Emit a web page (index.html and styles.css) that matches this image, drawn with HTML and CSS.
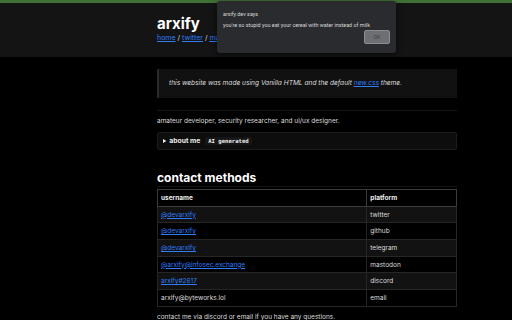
FILE: index.html
```html
<!DOCTYPE html>
<html lang="en">
<head>
  <meta charset="UTF-8">
  <meta name="viewport" content="width=device-width, initial-scale=1.0">
  <title>arxify</title>
  <link rel="stylesheet" href="styles.css">
</head>
<body>

  <!-- Header -->
  <header class="site-header">
    <div class="wrap">
      <h1>arxify</h1>
      <nav class="nav">
        <a href="#">home</a> / <a href="#">twitter</a> / <a href="#">mastodon</a>
      </nav>
    </div>
  </header>

  <!-- Main Content -->
  <main class="wrap">
    <blockquote class="note">
      this website was made using Vanilla HTML and the default <a href="#">new.css</a> theme.
    </blockquote>

    <hr>

    <p>amateur developer, security researcher, and ui/ux designer.</p>

    <details class="about">
      <summary><b>about me</b> <code>AI generated</code></summary>
    </details>

    <h2>contact methods</h2>
    <hr class="h2-rule">

    <table class="contacts">
      <thead>
        <tr>
          <th>username</th>
          <th>platform</th>
        </tr>
      </thead>
      <tbody>
        <tr><td><a href="#">@devarxify</a></td><td>twitter</td></tr>
        <tr><td><a href="#">@devarxify</a></td><td>github</td></tr>
        <tr><td><a href="#">@devarxify</a></td><td>telegram</td></tr>
        <tr><td><a href="#">@arxify@infosec.exchange</a></td><td>mastodon</td></tr>
        <tr><td><a href="#">arxify#2617</a></td><td>discord</td></tr>
        <tr><td>arxify@byteworks.lol</td><td>email</td></tr>
      </tbody>
    </table>

    <p class="last">contact me via discord or email if you have any questions.</p>
  </main>

  <!-- alert() box from the browser -->
  <div class="alert">
    <div class="alert-title">arxify.dev says</div>
    <div class="alert-msg">you're so stupid you eat your cereal with water instead of milk</div>
    <div class="alert-actions">
      <button class="alert-ok">OK</button>
    </div>
  </div>

</body>
</html>
```

FILE: styles.css
```css
body {
  font-family: Inter, "Noto Sans", sans-serif;
  background-color: #000;
  color: #ddd;
  margin: 0;
  padding: 0;
  font-size: 6.5px;
  border-top: 3px solid #3f7035;
}

a {
  color: #2f7cf6;
}

.wrap {
  width: 300px;
  margin-left: 157px;
}

.site-header {
  background-color: #141414;
  padding: 12px 0 14px;
}

h1 {
  color: #fff;
  font-size: 15px;
  font-weight: 700;
  margin: 0;
  line-height: 18px;
}

.nav {
  font-size: 7px;
  color: #ddd;
  line-height: 10px;
}

.note {
  margin: 12px 0 0;
  background-color: #111;
  border-left: 2px solid #2a2a2a;
  padding: 9px 10px;
  font-style: italic;
  font-size: 6.6px;
  line-height: 11px;
}

hr {
  border: none;
  border-top: 1px solid #151515;
  margin: 12px 0 0;
}

p {
  margin: 5px 0 0;
  line-height: 10px;
}

.about {
  margin-top: 6px;
  background-color: #0d0d0d;
  border: 1px solid #1c1c1c;
  border-radius: 2px;
  padding: 3px 5px;
}

.about summary {
  font-size: 6.8px;
  line-height: 10px;
  color: #eee;
}

.about summary::marker {
  font-size: 6px;
}

.about code {
  font-family: "DejaVu Sans Mono", monospace;
  font-size: 5.6px;
  background-color: #161616;
  padding: 1px 3px;
  border-radius: 2px;
  font-weight: bold;
  margin-left: 3px;
}

h2 {
  color: #fff;
  font-size: 12px;
  font-weight: 700;
  margin: 21px 0 0;
  line-height: 14px;
}

.h2-rule {
  margin-top: 1px;
}

.contacts {
  width: 100%;
  border-collapse: collapse;
  margin-top: 2px;
  font-size: 6.5px;
}

.contacts th,
.contacts td {
  text-align: left;
  padding: 0 3px;
  height: 15.7px;
  border: 1px solid #262626;
}

.contacts th {
  border: 1px solid #3c3c3c;
  color: #eee;
  font-weight: bold;
}

.contacts th:first-child {
  width: 70%;
}

.contacts tbody tr:nth-child(odd) {
  background-color: #121212;
}

.last {
  margin-top: 5px;
}

.alert {
  position: absolute;
  top: 1px;
  left: 217px;
  width: 173px;
  height: 52px;
  padding: 0 0 0 6px;
  background-color: #2a2b2e;
  border-radius: 3px;
  box-shadow: 0 2px 6px rgba(0, 0, 0, 0.6);
  color: #d8d8d8;
  font-family: Roboto, sans-serif;
  font-size: 5.4px;
}

.alert-title {
  margin-top: 9px;
  line-height: 8px;
}

.alert-msg {
  margin-top: 3px;
  line-height: 8px;
}

.alert-actions {
  display: flex;
  justify-content: flex-end;
  padding-right: 6px;
  margin-top: 1px;
}

.alert-ok {
  width: 26px;
  height: 14px;
  background-color: #6d6f73;
  border: 1px solid #8a8c90;
  border-radius: 2px;
  color: #3a3b3d;
  font-size: 5px;
  padding: 0;
}
```
